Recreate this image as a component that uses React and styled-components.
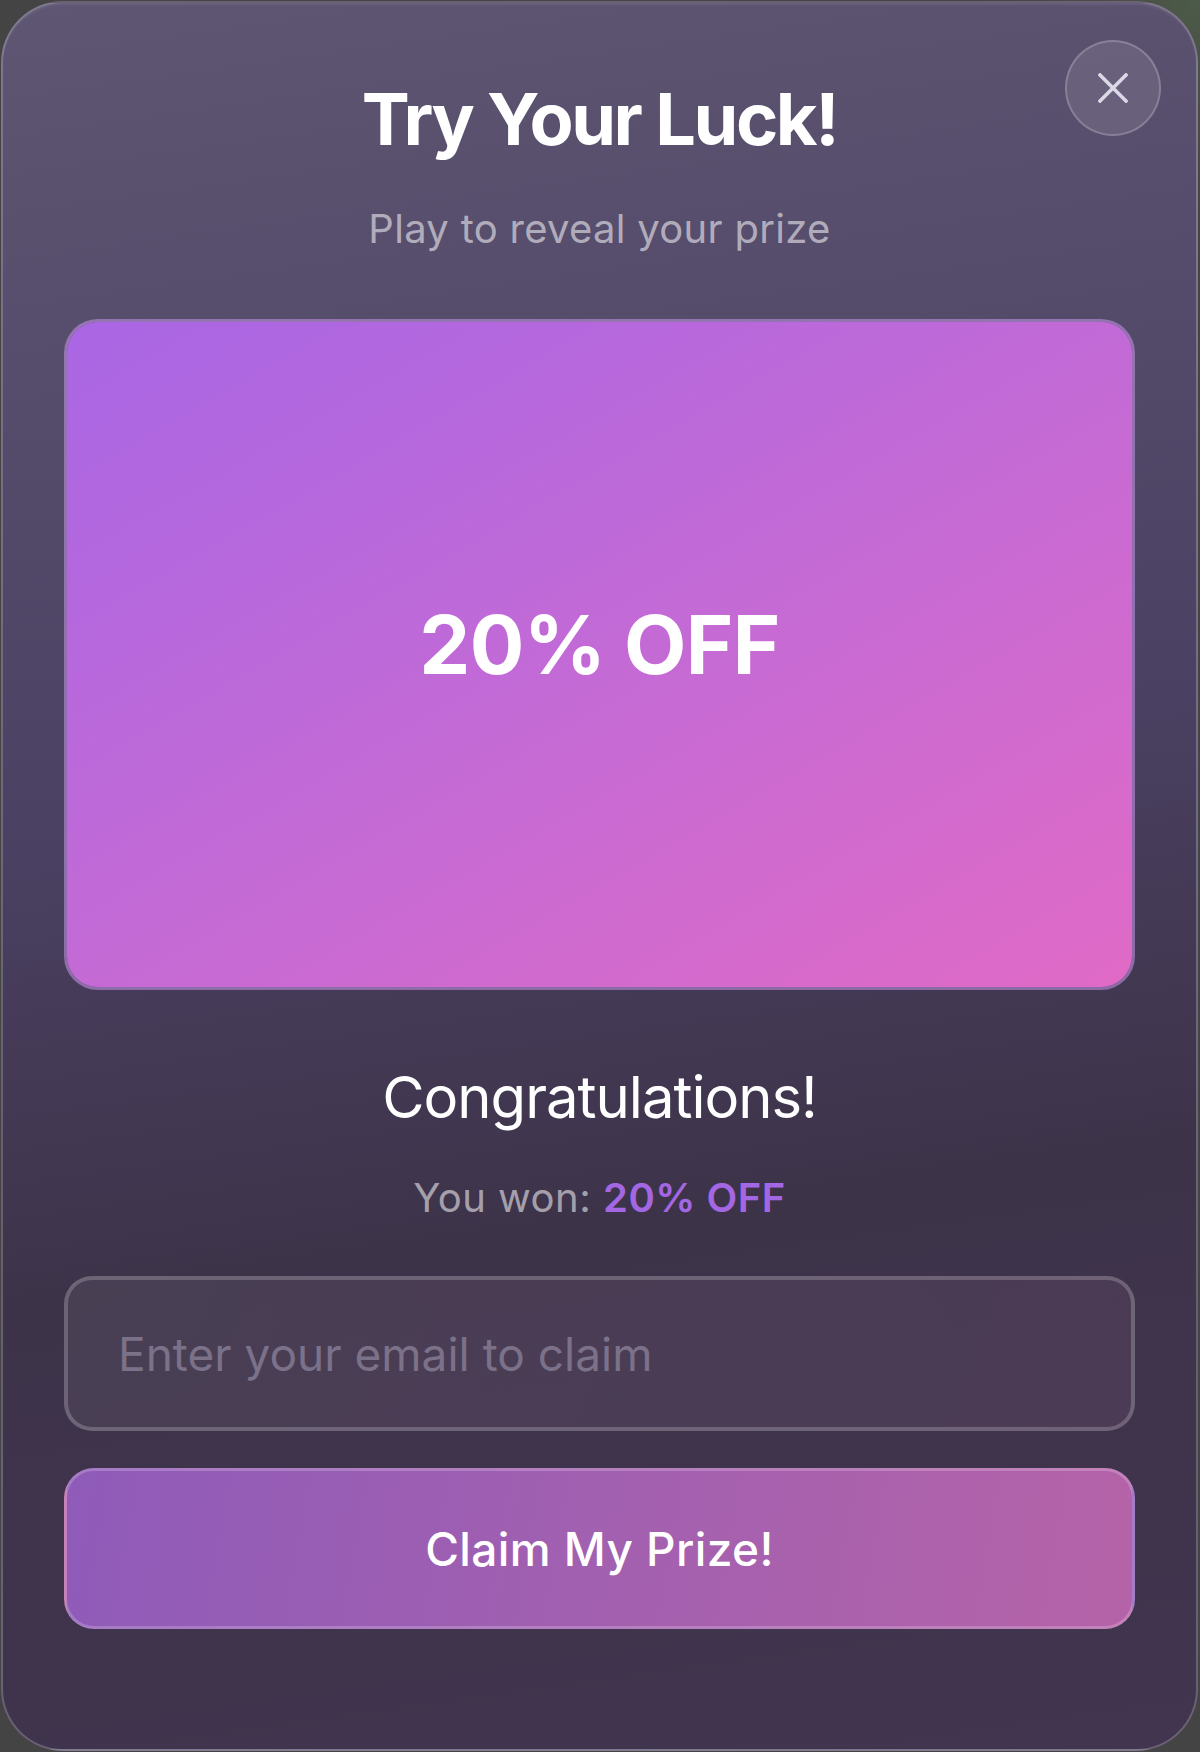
import React from "react";
import styled, { createGlobalStyle } from "styled-components";

const GlobalStyle = createGlobalStyle`
  * {
    box-sizing: border-box;
  }
  body {
    margin: 0;
    font-family: "Inter", "Noto Sans", sans-serif;
    background: radial-gradient(circle at 100% 0%, #4c5b48 0, #4a4d47 90px, #444444 220px),
      #444444;
  }
`;

const Page = styled.div`
  padding: 1px 2px 2px 1px;
`;

const Modal = styled.div`
  position: relative;
  width: 1197px;
  min-height: 1749px;
  border-radius: 62px;
  border: 2px solid rgba(255, 255, 255, 0.22);
  background: linear-gradient(172deg, #5e5672 0%, #554b6b 22%, #4a4061 45%, #3d3349 68%, #41354f 100%);
  box-shadow: inset 0 3px 2px -1px rgba(255, 255, 255, 0.08);
  padding: 73px 61px 120px;
  display: flex;
  flex-direction: column;
  align-items: stretch;
  color: #fff;
`;

const CloseBtn = styled.button`
  position: absolute;
  top: 37px;
  right: 35px;
  width: 96px;
  height: 96px;
  border-radius: 50%;
  border: 2px solid rgba(255, 255, 255, 0.2);
  background: rgba(255, 255, 255, 0.1);
  display: flex;
  align-items: center;
  justify-content: center;
  padding: 0;
  cursor: pointer;
`;

const Title = styled.h1`
  margin: 0;
  text-align: center;
  font-size: 72px;
  line-height: 86px;
  font-weight: 700;
  letter-spacing: -2.4px;
  color: #fff;
`;

const Subtitle = styled.p`
  margin: 43px 0 0;
  text-align: center;
  font-size: 40px;
  line-height: 48px;
  letter-spacing: 0.3px;
  color: rgba(255, 255, 255, 0.55);
`;

const PrizeCard = styled.div`
  margin-top: 66px;
  height: 671px;
  border-radius: 34px;
  border: 3px solid rgba(200, 150, 235, 0.55);
  background: linear-gradient(150deg, #a966e4 0%, #c36ad6 50%, #e06ac6 100%);
  background-clip: padding-box;
  display: flex;
  align-items: center;
  justify-content: center;
  padding-bottom: 20px;
`;

const PrizeText = styled.div`
  font-size: 81px;
  font-weight: 700;
  letter-spacing: -0.6px;
  color: #fff;
`;

const Congrats = styled.h2`
  margin: 72px 0 0;
  text-align: center;
  font-size: 58px;
  line-height: 70px;
  font-weight: 400;
  letter-spacing: -1px;
  color: #fff;
`;

const WonLine = styled.p`
  margin: 42px 0 0;
  text-align: center;
  font-size: 40px;
  line-height: 48px;
  letter-spacing: 0.5px;
  color: rgba(255, 255, 255, 0.55);
`;

const Highlight = styled.span`
  color: #a467e4;
  font-weight: 600;
`;

const EmailInput = styled.input`
  margin-top: 54px;
  height: 155px;
  width: 100%;
  border-radius: 28px;
  border: 4px solid rgba(255, 255, 255, 0.2);
  background: linear-gradient(110deg, rgba(255, 255, 255, 0.06), rgba(255, 160, 220, 0.07));
  padding: 0 50px;
  font-family: "Inter", "Noto Sans", sans-serif;
  font-size: 46px;
  color: #fff;
  outline: none;
  &::placeholder {
    color: #7b7189;
  }
`;

const ClaimBtn = styled.button`
  margin-top: 37px;
  height: 161px;
  width: 100%;
  border-radius: 30px;
  border: 3px solid rgba(255, 255, 255, 0.2);
  background: linear-gradient(100deg, #8f5bb9 0%, #a260b0 50%, #b563a8 100%);
  font-family: "Inter", "Noto Sans", sans-serif;
  font-size: 46px;
  font-weight: 500;
  letter-spacing: 0.4px;
  color: #fff;
  cursor: pointer;
`;

const CloseIcon = () => (
  <svg width="30" height="30" viewBox="0 0 30 30">
    <path d="M2 2 L28 28 M28 2 L2 28" stroke="#dcd8e4" strokeWidth="3.6" strokeLinecap="square" />
  </svg>
);

export default function App() {
  return (
    <>
      <GlobalStyle />
      <Page>
        <Modal>
          <CloseBtn aria-label="Close">
            <CloseIcon />
          </CloseBtn>
          <Title>Try Your Luck!</Title>
          <Subtitle>Play to reveal your prize</Subtitle>
          <PrizeCard>
            <PrizeText>20% OFF</PrizeText>
          </PrizeCard>
          <Congrats>Congratulations!</Congrats>
          <WonLine>
            You won: <Highlight>20% OFF</Highlight>
          </WonLine>
          <EmailInput type="email" placeholder="Enter your email to claim" />
          <ClaimBtn>Claim My Prize!</ClaimBtn>
        </Modal>
      </Page>
    </>
  );
}
